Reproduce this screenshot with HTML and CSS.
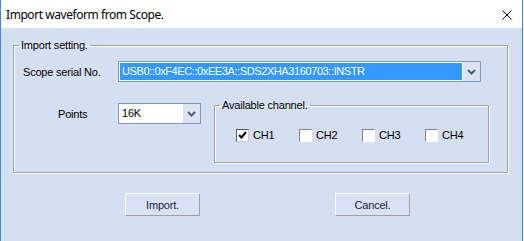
FILE: index.html
```html
<!DOCTYPE html>
<html lang="en">
<head>
    <meta charset="UTF-8">
    <title>Import waveform from Scope.</title>
    <link rel="stylesheet" href="styles.css">
</head>
<body>
    <div class="window">
        <div class="titlebar">
            <span class="title">Import waveform from Scope.</span>
            <svg class="close" width="10" height="10" viewBox="0 0 10 10">
                <path d="M0.5 0.5 L9.5 9.5 M9.5 0.5 L0.5 9.5" stroke="#000" stroke-width="1" fill="none"/>
            </svg>
        </div>

        <div class="client">
            <fieldset class="group main-group">
                <legend>Import setting.</legend>

                <div class="row">
                    <label class="label serial-label">Scope serial No.</label>
                    <div class="combo serial-combo">
                        <div class="combo-text selected">USB0::0xF4EC::0xEE3A::SDS2XHA3160703::INSTR</div>
                        <div class="combo-btn">
                            <svg width="9" height="6" viewBox="0 0 9 6"><path d="M1 1 L4.5 4.5 L8 1" stroke="#4b5e80" stroke-width="2" fill="none"/></svg>
                        </div>
                    </div>
                </div>

                <div class="row second-row">
                    <label class="label points-label">Points</label>
                    <div class="combo points-combo">
                        <div class="combo-text">16K</div>
                        <div class="combo-btn">
                            <svg width="9" height="6" viewBox="0 0 9 6"><path d="M1 1 L4.5 4.5 L8 1" stroke="#4b5e80" stroke-width="2" fill="none"/></svg>
                        </div>
                    </div>

                    <fieldset class="group channel-group">
                        <legend>Available channel.</legend>
                        <div class="channels">
                            <div class="channel">
                                <span class="checkbox checked">
                                    <svg width="11" height="11" viewBox="0 0 11 11"><path d="M2 5 L4.5 7.5 L9 2" stroke="#000" stroke-width="2" fill="none"/></svg>
                                </span>
                                <span>CH1</span>
                            </div>
                            <div class="channel"><span class="checkbox"></span><span>CH2</span></div>
                            <div class="channel"><span class="checkbox"></span><span>CH3</span></div>
                            <div class="channel"><span class="checkbox"></span><span>CH4</span></div>
                        </div>
                    </fieldset>
                </div>
            </fieldset>

            <div class="buttons">
                <button class="btn import-btn">Import.</button>
                <button class="btn cancel-btn">Cancel.</button>
            </div>
        </div>
    </div>
</body>
</html>
```

FILE: styles.css
```css
body {
    margin: 0;
    background-color: #ffffff;
    font-family: 'Liberation Sans', Arial, sans-serif;
    font-size: 11px;
    letter-spacing: -0.2px;
    color: #000;
}

.window {
    width: 521px;
    height: 241px;
    border-left: 1px solid #3f86d3;
    border-right: 1px solid #3f86d3;
    background-color: #d5dff2;
}

.titlebar {
    height: 28px;
    background-color: #ffffff;
    display: flex;
    align-items: center;
    justify-content: space-between;
    padding: 0 10px 0 5px;
}

.title {
    font-family: 'Noto Sans', 'Open Sans', sans-serif;
    font-size: 12px;
    letter-spacing: -0.44px;
    line-height: 16px;
    margin-top: 1px;
}

.close {
    display: block;
    margin-top: 1px;
}

.client {
    padding: 9px 0 0 12px;
}

/* Group boxes */
.group {
    margin: 0;
    border: 1px solid #a0a0a0;
    box-shadow: 1px 1px 0 #fff, inset 1px 1px 0 #fff;
    padding: 0;
}

.group legend {
    padding: 0 2px;
    line-height: 16px;
}

.main-group {
    width: 495px;
    height: 136px;
    box-sizing: border-box;
    padding: 8px 0 0 9px;
}

.main-group legend {
    margin-left: -4px;
}

.row {
    display: flex;
    align-items: center;
}

.label {
    width: 95px;
    line-height: 16px;
}

.points-label {
    padding-left: 35px;
    width: 60px;
    align-self: flex-start;
    margin-top: 3px;
}

.second-row {
    align-items: flex-start;
    margin-top: 21px;
}

/* Combo boxes */
.combo {
    display: flex;
    height: 21px;
    box-sizing: border-box;
    border: 1px solid #7a9ac4;
    background-color: #fff;
}

.serial-combo {
    width: 363px;
}

.points-combo {
    width: 83px;
}

.combo-text {
    flex: 1;
    line-height: 17px;
    margin: 1px;
    padding-left: 2px;
    white-space: nowrap;
    overflow: hidden;
}

.combo-text.selected {
    background-color: #3399ff;
    color: #fff;
    letter-spacing: -0.4px;
}

.combo-btn {
    width: 17px;
    background-color: #dde3ee;
    display: flex;
    align-items: center;
    justify-content: center;
}

/* Channel group */
.channel-group {
    width: 267px;
    height: 66px;
    box-sizing: border-box;
    margin-left: 13px;
    margin-top: -6px;
    padding: 14px 0 0 21px;
}

.channel-group legend {
    margin-left: -16px;
}

.channels {
    display: flex;
}

.channel {
    width: 63px;
    display: flex;
    align-items: center;
    gap: 4px;
    line-height: 16px;
}

.checkbox {
    width: 13px;
    height: 13px;
    box-sizing: border-box;
    border: 1px solid;
    border-color: #808080 #fff #fff #808080;
    background-color: #fff;
    display: flex;
    align-items: center;
    justify-content: center;
}

.checkbox.checked {
    border-color: #555 #ccc #ccc #555;
}

/* Buttons */
.buttons {
    display: flex;
    margin-top: 20px;
    padding-left: 112px;
    gap: 135px;
}

.btn {
    width: 75px;
    height: 23px;
    font-family: inherit;
    font-size: 11px;
    letter-spacing: -0.2px;
    color: #1a1a3a;
    background-color: #d9e2f3;
    border: 1px solid;
    border-color: #fff #a0a0a0 #a0a0a0 #fff;
    padding: 0;
}
```
